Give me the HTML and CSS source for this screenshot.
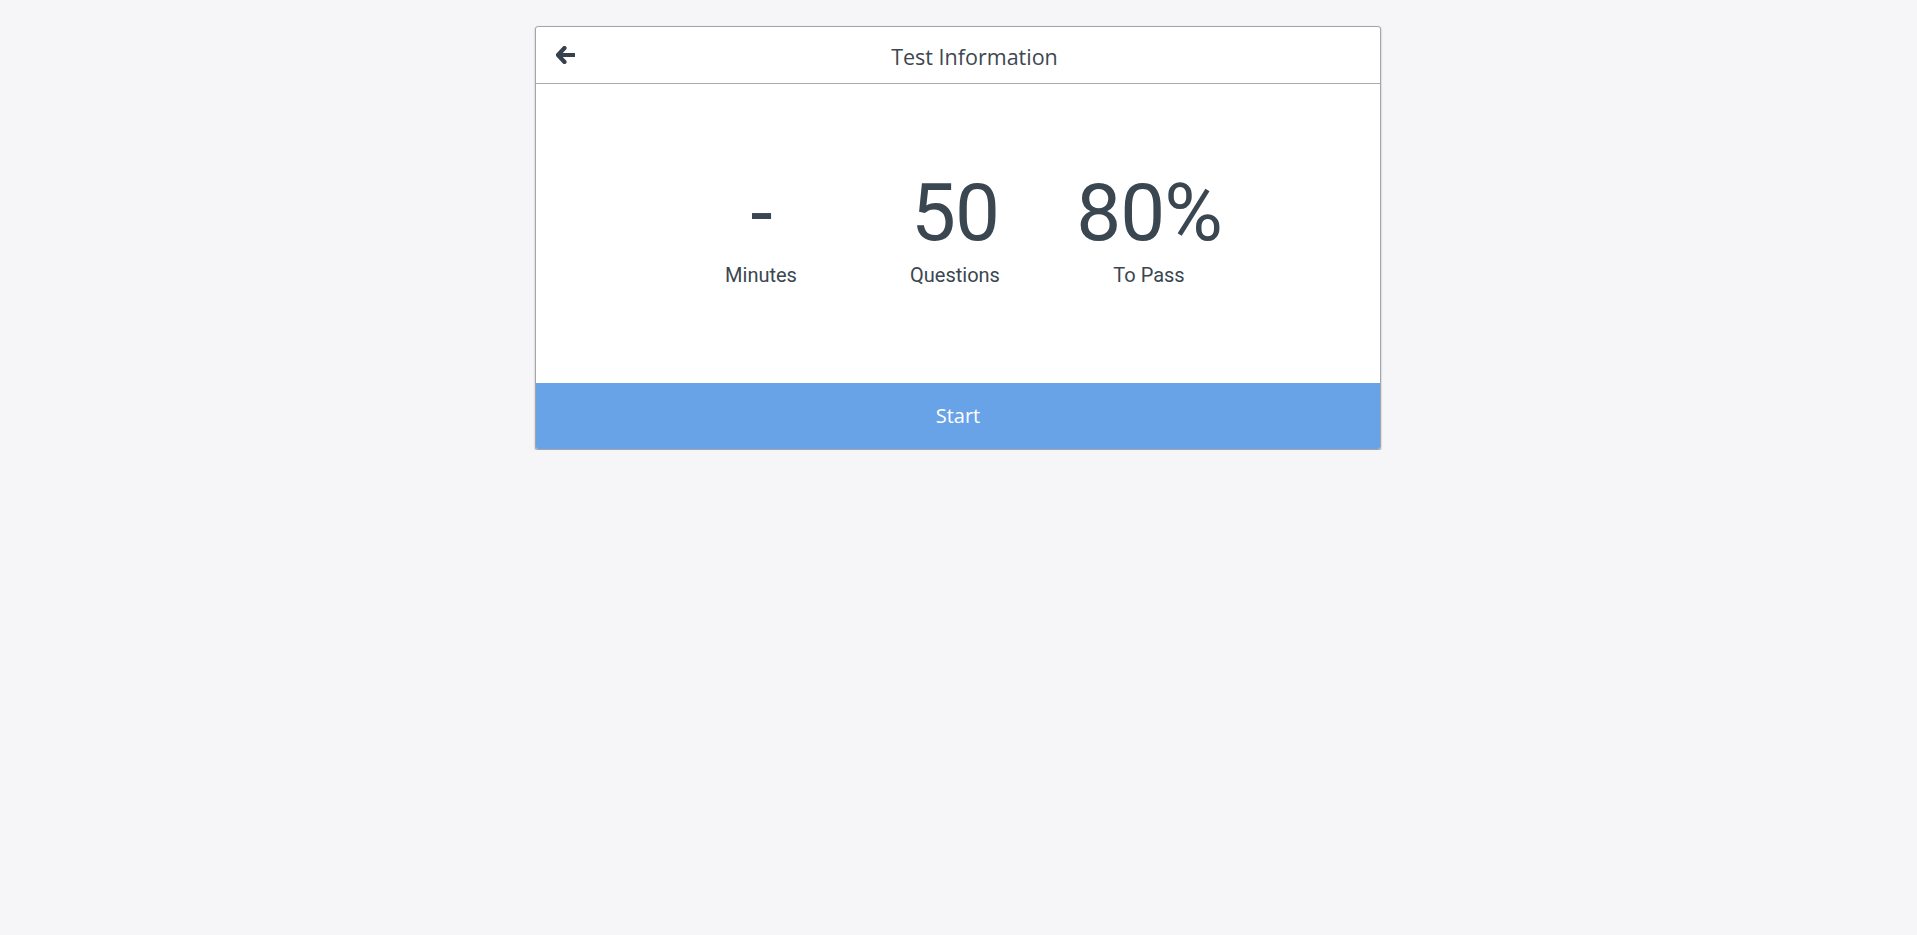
FILE: index.html
```html
<!DOCTYPE html>
<html lang="en">
<head>
<meta charset="utf-8">
<title>Test Information</title>
<link rel="stylesheet" href="styles.css">
</head>
<body>
<div class="card">
  <div class="card-header">
    <button class="back" aria-label="Back">
      <svg width="19" height="18" viewBox="0 0 19 18"><path d="M8.5 2 L2 9 L8.5 16 M2.5 9 H18.5" fill="none" stroke="#35414c" stroke-width="4.2" stroke-linecap="round" stroke-linejoin="round"/></svg>
    </button>
    <div class="title">Test Information</div>
  </div>
  <div class="card-body">
    <div class="stats">
      <div class="stat"><div class="value">-</div><div class="label">Minutes</div></div>
      <div class="stat"><div class="value">50</div><div class="label">Questions</div></div>
      <div class="stat"><div class="value">80%</div><div class="label">To Pass</div></div>
    </div>
  </div>
  <button class="start">Start</button>
</div>
</body>
</html>
```

FILE: styles.css
```css
html, body {
  margin: 0;
  padding: 0;
}
body {
  background: #f6f6f8;
  font-family: "Open Sans", "Liberation Sans", sans-serif;
  color: #3b4650;
  padding-top: 26px;
  padding-right: 1px;
}
.card {
  width: 846px;
  box-sizing: border-box;
  margin: 0 auto;
  background: #fff;
  border: 1px solid #a3a5a8;
  border-radius: 3px;
  box-shadow: 0 1px 2px rgba(0, 0, 0, 0.3);
  overflow: hidden;
}
.card-header {
  height: 57px;
  box-sizing: border-box;
  border-bottom: 1px solid #a9abae;
  display: flex;
  align-items: center;
  padding-left: 20px;
}
.back {
  border: 0;
  background: none;
  padding: 0;
  width: 19px;
  height: 18px;
  display: flex;
  cursor: pointer;
}
.title {
  flex: 1;
  text-align: center;
  font-size: 21.5px;
  padding-top: 2px;
  padding-right: 6px;
  color: #3d4751;
}
.card-body {
  height: 299px;
  box-sizing: border-box;
  padding-top: 89px;
  padding-right: 6px;
  display: flex;
  justify-content: center;
}
.stats {
  display: flex;
}
.stat {
  width: 194px;
  text-align: center;
  font-family: Roboto, "Liberation Sans", sans-serif;
}
.value {
  font-size: 80px;
  line-height: 80px;
  height: 80px;
  letter-spacing: -1px;
  color: #3a4650;
}
.label {
  margin-top: 10px;
  font-size: 20px;
  line-height: 24px;
  color: #3a4650;
}
.start {
  display: block;
  width: 100%;
  height: 66px;
  border: 0;
  margin: 0;
  padding: 0 0 2px;
  background: #68a3e8;
  color: #fff;
  font-family: "Open Sans", "Liberation Sans", sans-serif;
  font-size: 20px;
  cursor: pointer;
}
```
